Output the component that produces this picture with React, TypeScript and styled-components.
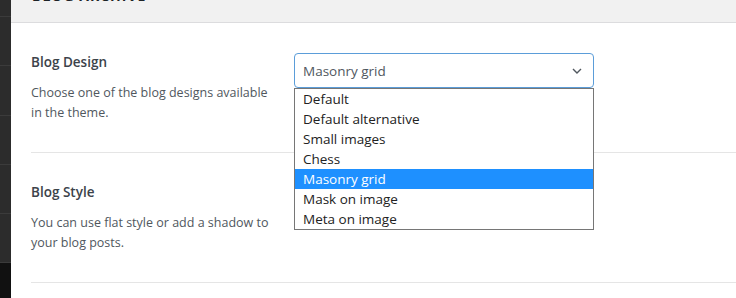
import styled, { createGlobalStyle } from 'styled-components';

const GlobalStyle = createGlobalStyle`
  html, body {
    margin: 0;
    padding: 0;
    background: #fff;
  }
  body {
    font-family: 'Open Sans', 'Noto Sans', sans-serif;
    color: #333;
    overflow: hidden;
  }
`;

const Page = styled.div`
  display: flex;
  width: 736px;
  height: 298px;
  overflow: hidden;
`;

const Sidebar = styled.div`
  width: 11px;
  flex-shrink: 0;
  display: flex;
  flex-direction: column;
  background: #111;
`;

const SideItem = styled.div<{ $h: number }>`
  height: ${(p) => p.$h}px;
  background: #2c2c2c;
  border-bottom: 1px solid #3b3b3b;
  box-sizing: border-box;
`;

const Main = styled.div`
  flex: 1;
  display: flex;
  flex-direction: column;
`;

const Header = styled.div`
  height: 23px;
  box-sizing: border-box;
  background: #f1f1f1;
  border-bottom: 1px solid #dcdcde;
  padding-left: 21px;
  overflow: hidden;
`;

const Title = styled.h2`
  margin: -12px 0 0;
  font-size: 14px;
  line-height: 16px;
  font-weight: 700;
  letter-spacing: 1px;
  text-transform: uppercase;
  color: #1d2327;
`;

const Section = styled.div`
  margin-left: 20px;
  padding: 30px 0 29px;
  border-bottom: 1px solid #e5e5e5;
  display: grid;
  grid-template-columns: 263px 300px;
  align-items: start;
`;

const Info = styled.div`
  display: flex;
  flex-direction: column;
`;

const Label = styled.div`
  font-size: 13.5px;
  line-height: 18px;
  font-weight: 600;
  color: #3c434a;
`;

const Desc = styled.p`
  margin: 12px 0 0;
  width: 240px;
  font-size: 12.5px;
  line-height: 20px;
  color: #50575e;
`;

const SelectWrap = styled.div`
  position: relative;
`;

const SelectBox = styled.div`
  height: 35px;
  box-sizing: border-box;
  border: 1px solid #5b9dd9;
  border-radius: 4px;
  padding: 0 11px 0 8px;
  display: flex;
  align-items: center;
  justify-content: space-between;
  font-size: 13.5px;
  color: #50575e;
  background: #fff;
`;

const Options = styled.ul`
  position: absolute;
  top: 100%;
  left: 0;
  right: 0;
  margin: 0;
  padding: 0;
  list-style: none;
  border: 1px solid #767676;
  background: #fff;
  z-index: 2;
`;

const Option = styled.li<{ $active?: boolean }>`
  height: 20px;
  line-height: 20px;
  padding-left: 8px;
  font-size: 13.5px;
  color: ${(p) => (p.$active ? '#fff' : '#222')};
  background: ${(p) => (p.$active ? '#1e90ff' : 'transparent')};
`;

const Chevron = () => (
  <svg width="10" height="6" viewBox="0 0 10 6" fill="none">
    <path d="M1 1l4 4 4-4" stroke="#50575e" strokeWidth="1.4" />
  </svg>
);

const designs = [
  'Default',
  'Default alternative',
  'Small images',
  'Chess',
  'Masonry grid',
  'Mask on image',
  'Meta on image',
];

export default function App() {
  const selected = 'Masonry grid';
  return (
    <>
      <GlobalStyle />
      <Page>
        <Sidebar>
          <SideItem $h={17} />
          <SideItem $h={49} />
          <SideItem $h={50} />
          <SideItem $h={49} />
          <SideItem $h={49} />
          <SideItem $h={49} />
        </Sidebar>
        <Main>
          <Header>
            <Title>Blog Archive</Title>
          </Header>
          <Section>
            <Info>
              <Label>Blog Design</Label>
              <Desc>Choose one of the blog designs available in the theme.</Desc>
            </Info>
            <SelectWrap>
              <SelectBox>
                {selected}
                <Chevron />
              </SelectBox>
              <Options>
                {designs.map((d) => (
                  <Option key={d} $active={d === selected}>
                    {d}
                  </Option>
                ))}
              </Options>
            </SelectWrap>
          </Section>
          <Section>
            <Info>
              <Label>Blog Style</Label>
              <Desc>You can use flat style or add a shadow to your blog posts.</Desc>
            </Info>
          </Section>
        </Main>
      </Page>
    </>
  );
}
